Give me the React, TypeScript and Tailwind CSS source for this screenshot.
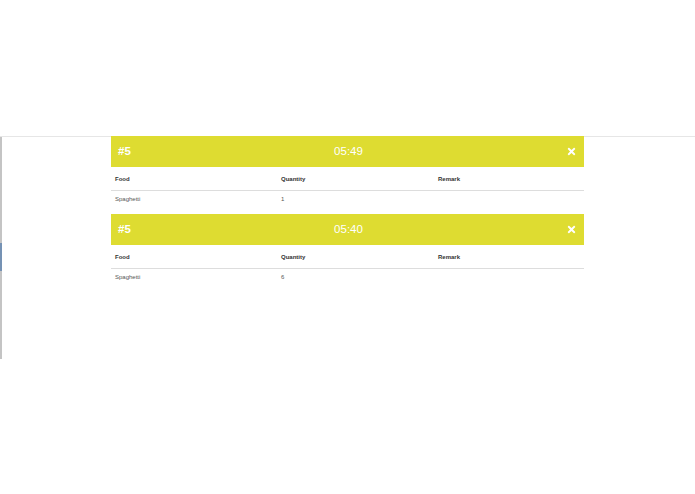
import React from 'react';
import { FaTimes } from 'react-icons/fa';

type Item = { food: string; quantity: number; remark: string };
type Order = { id: number; time: string; items: Item[] };

const orders: Order[] = [
  { id: 5, time: '05:49', items: [{ food: 'Spaghetti', quantity: 1, remark: '' }] },
  { id: 5, time: '05:40', items: [{ food: 'Spaghetti', quantity: 6, remark: '' }] },
];

function OrderCard({ order }: { order: Order }) {
  return (
    <div className="w-[473px]">
      <div className="flex h-[31px] items-center justify-between bg-[#dedc31] px-[7px] text-white">
        <span className="w-[60px] text-[11.5px] font-bold">#{order.id}</span>
        <span className="pl-[2px] text-[11.5px]">{order.time}</span>
        <span className="flex w-[60px] justify-end">
          <FaTimes className="h-[11px] w-[11px]" />
        </span>
      </div>
      <div className="flex h-[24px] items-center border-b border-[#dddddd] pt-[1px] text-[6px] font-bold leading-[8px] text-[#333]">
        <div className="w-[166px] pl-[4px]">Food</div>
        <div className="w-[157px] pl-[4px]">Quantity</div>
        <div className="flex-1 pl-[4px]">Remark</div>
      </div>
      {order.items.map((item, i) => (
        <div key={i} className="flex h-[23px] items-start pt-[4px] text-[6px] leading-[8px] text-[#555]">
          <div className="w-[166px] pl-[4px]">{item.food}</div>
          <div className="w-[157px] pl-[4px]">{item.quantity}</div>
          <div className="flex-1 pl-[4px]">{item.remark}</div>
        </div>
      ))}
    </div>
  );
}

export default function App() {
  return (
    <div className="h-[494px] w-[695px] bg-white pt-[136px] font-['Liberation_Sans',Arial,sans-serif]">
      <div className="flex border-t border-[#e6e6e6]">
        <div className="flex h-[222px] w-[2px] flex-col bg-[#c4c4c4]">
          <div className="h-[106px]" />
          <div className="h-[28px] bg-[#7592b4]" />
        </div>
        <div className="-mt-px flex flex-1 flex-col items-center pr-[2px]">
          {orders.map((o, i) => (
            <OrderCard key={i} order={o} />
          ))}
        </div>
      </div>
    </div>
  );
}
